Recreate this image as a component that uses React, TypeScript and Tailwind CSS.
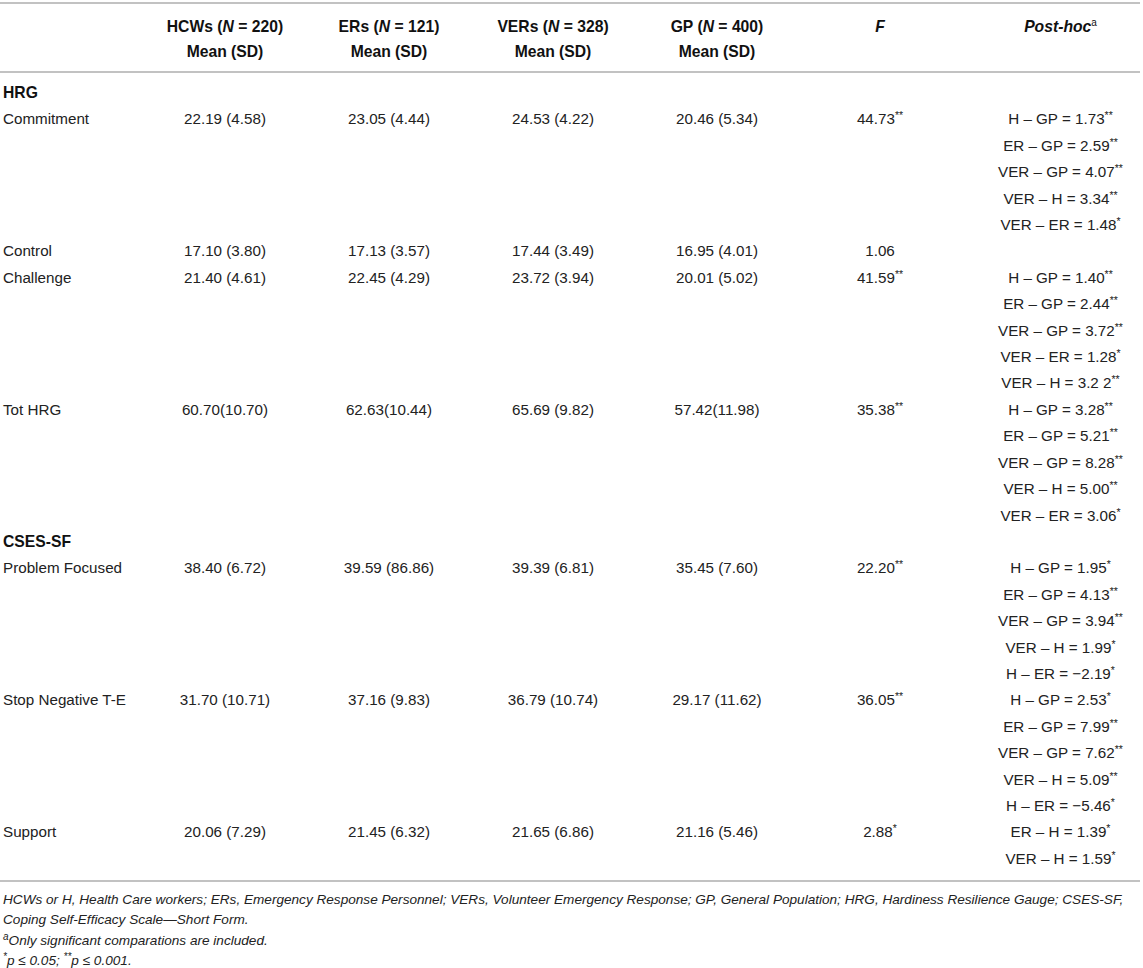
type Entry = [string, string?];

type Row =
  | { section: string }
  | {
      label: string;
      vals: string[];
      f: Entry;
      post: Entry[];
    };

const rows: Row[] = [
  { section: "HRG" },
  {
    label: "Commitment",
    vals: ["22.19 (4.58)", "23.05 (4.44)", "24.53 (4.22)", "20.46 (5.34)"],
    f: ["44.73", "**"],
    post: [
      ["H – GP = 1.73", "**"],
      ["ER – GP = 2.59", "**"],
      ["VER – GP = 4.07", "**"],
      ["VER – H = 3.34", "**"],
      ["VER – ER = 1.48", "*"],
    ],
  },
  {
    label: "Control",
    vals: ["17.10 (3.80)", "17.13 (3.57)", "17.44 (3.49)", "16.95 (4.01)"],
    f: ["1.06"],
    post: [],
  },
  {
    label: "Challenge",
    vals: ["21.40 (4.61)", "22.45 (4.29)", "23.72 (3.94)", "20.01 (5.02)"],
    f: ["41.59", "**"],
    post: [
      ["H – GP = 1.40", "**"],
      ["ER – GP = 2.44", "**"],
      ["VER – GP = 3.72", "**"],
      ["VER – ER = 1.28", "*"],
      ["VER – H = 3.2 2", "**"],
    ],
  },
  {
    label: "Tot HRG",
    vals: ["60.70(10.70)", "62.63(10.44)", "65.69 (9.82)", "57.42(11.98)"],
    f: ["35.38", "**"],
    post: [
      ["H – GP = 3.28", "**"],
      ["ER – GP = 5.21", "**"],
      ["VER – GP = 8.28", "**"],
      ["VER – H = 5.00", "**"],
      ["VER – ER = 3.06", "*"],
    ],
  },
  { section: "CSES-SF" },
  {
    label: "Problem Focused",
    vals: ["38.40 (6.72)", "39.59 (86.86)", "39.39 (6.81)", "35.45 (7.60)"],
    f: ["22.20", "**"],
    post: [
      ["H – GP = 1.95", "*"],
      ["ER – GP = 4.13", "**"],
      ["VER – GP = 3.94", "**"],
      ["VER – H = 1.99", "*"],
      ["H – ER = −2.19", "*"],
    ],
  },
  {
    label: "Stop Negative T-E",
    vals: ["31.70 (10.71)", "37.16 (9.83)", "36.79 (10.74)", "29.17 (11.62)"],
    f: ["36.05", "**"],
    post: [
      ["H – GP = 2.53", "*"],
      ["ER – GP = 7.99", "**"],
      ["VER – GP = 7.62", "**"],
      ["VER – H = 5.09", "**"],
      ["H – ER = −5.46", "*"],
    ],
  },
  {
    label: "Support",
    vals: ["20.06 (7.29)", "21.45 (6.32)", "21.65 (6.86)", "21.16 (5.46)"],
    f: ["2.88", "*"],
    post: [
      ["ER – H = 1.39", "*"],
      ["VER – H = 1.59", "*"],
    ],
  },
];

const grid =
  "grid grid-cols-[143px_164px_164px_164px_164px_162px_1fr]";

function Stars({ s }: { s?: string }) {
  if (!s) return null;
  return <sup className="text-[10.5px] -top-[5px]">{s}</sup>;
}

function Rule() {
  return <div className="h-[2px] w-full bg-[#c2c2c2]" />;
}

function Head({ group, n }: { group: string; n: string }) {
  return (
    <div className="text-center">
      <div>
        {group} (<i>N</i> = {n})
      </div>
      <div>Mean (SD)</div>
    </div>
  );
}

export default function App() {
  return (
    <div className="min-h-screen w-[1143px] bg-white font-['Liberation_Sans',Arial,sans-serif] text-[15.2px] text-[#222]">
      <div className="w-[1140px] pt-[2px]">
        <Rule />

        <div className={`${grid} pt-[10px] pb-[7px] text-[15.7px] font-bold leading-[25px] text-[#111]`}>
          <div />
          <Head group="HCWs" n="220" />
          <Head group="ERs" n="121" />
          <Head group="VERs" n="328" />
          <Head group="GP" n="400" />
          <div className="text-center italic">F</div>
          <div className="pl-[20px] text-center">
            <i>Post-hoc</i>
            <sup className="text-[10px] font-normal -top-[6px]">a</sup>
          </div>
        </div>

        <Rule />

        <div className="pt-[7px] pb-[8px] leading-[26.4px]">
          {rows.map((row, i) =>
            "section" in row ? (
              <div key={i} className="pl-[3px] text-[15.7px] font-bold text-[#111]">
                {row.section}
              </div>
            ) : (
              <div key={i} className={`${grid} items-start`}>
                <div className="pl-[3px]">{row.label}</div>
                {row.vals.map((v) => (
                  <div key={v} className="text-center">
                    {v}
                  </div>
                ))}
                <div className="text-center">
                  {row.f[0]}
                  <Stars s={row.f[1]} />
                </div>
                <div className="flex flex-col pl-[20px] text-center">
                  {row.post.map(([t, s]) => (
                    <div key={t}>
                      {t}
                      <Stars s={s} />
                    </div>
                  ))}
                </div>
              </div>
            )
          )}
        </div>

        <Rule />

        <div className="pt-[8px] pl-[3px] text-[13.6px] italic leading-[20.3px] text-[#222]">
          <p>
            HCWs or H, Health Care workers; ERs, Emergency Response Personnel;
            VERs, Volunteer Emergency Response; GP, General Population; HRG,
            Hardiness Resilience Gauge; CSES-SF,
            <br />
            Coping Self-Efficacy Scale—Short Form.
          </p>
          <p>
            <sup className="text-[10px] -top-[5px]">a</sup>Only significant
            comparations are included.
          </p>
          <p>
            <sup className="text-[10px] -top-[5px]">*</sup>p ≤ 0.05;{" "}
            <sup className="text-[10px] -top-[5px]">**</sup>p ≤ 0.001.
          </p>
        </div>
      </div>
    </div>
  );
}
